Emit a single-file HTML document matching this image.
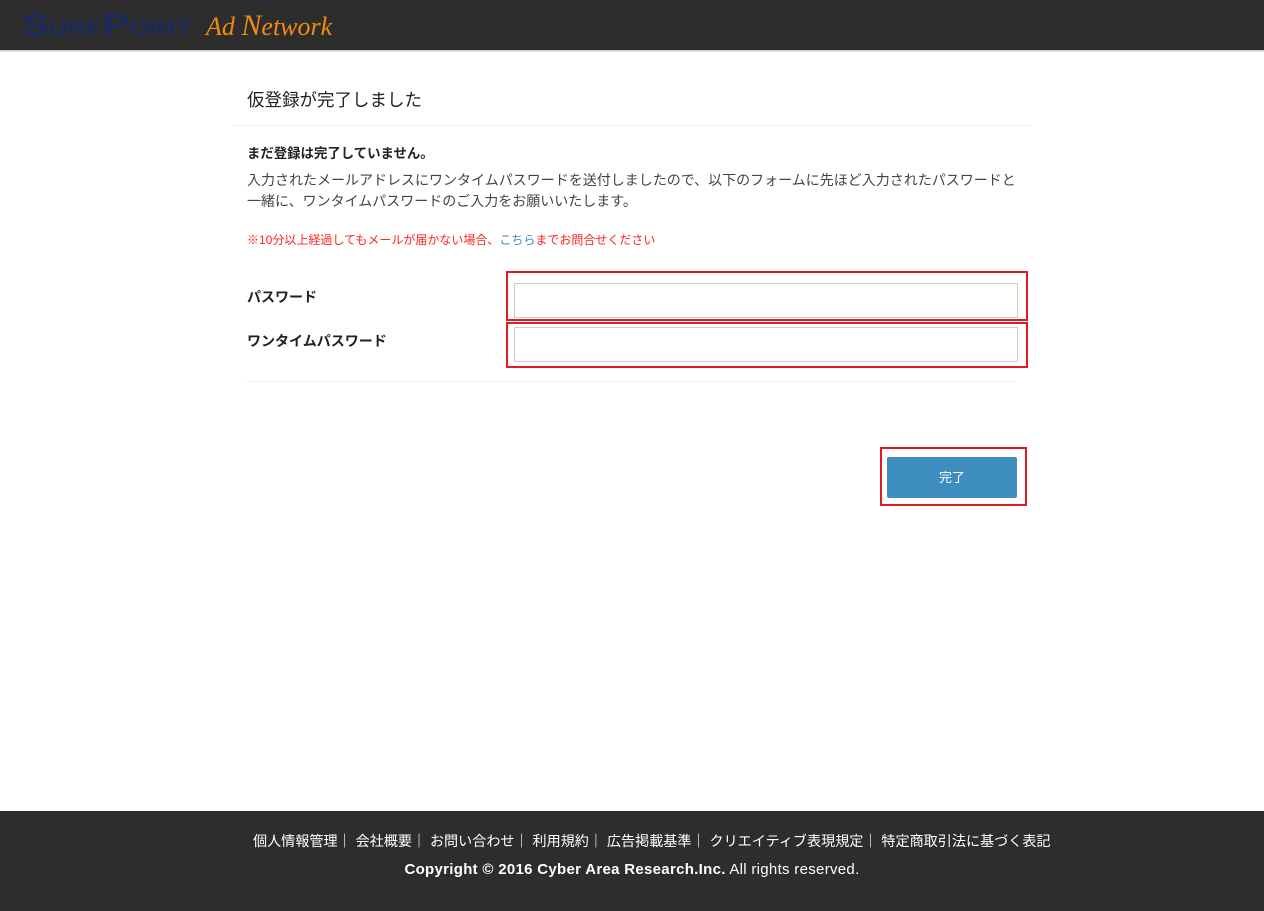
<!DOCTYPE html>
<html><head><meta charset="utf-8"><style>
body{margin:0;width:1264px;height:911px;position:relative;background:#fff;font-family:"Liberation Sans","Noto Sans CJK JP",sans-serif;color:#333;overflow:hidden}
.hdr{position:absolute;left:0;top:0;width:1264px;height:50px;background:#2d2d2d;box-shadow:0 1px 2px rgba(0,0,0,.3)}
.logo1{position:absolute;left:22px;top:9px;font-family:"Liberation Sans",sans-serif;font-weight:900;color:#1a2a5e;font-size:31px;line-height:32px;white-space:nowrap;transform:scaleX(1.3);transform-origin:left}
.logo1 small{font-size:20px}
.logo2{position:absolute;left:206px;top:9px;font-family:"Liberation Serif",serif;font-style:italic;color:#f08c10;font-size:26px;white-space:nowrap}
.abs{position:absolute;white-space:nowrap}
.box{position:absolute;border:2px solid #e01b24}
.inp{position:absolute;border:1px solid #ccc;background:#fff}
.ftr{position:absolute;left:0;top:811px;width:1264px;height:100px;background:#2d2d2d;color:#fff}
</style></head><body>
<div class="hdr"><div class="logo1">S<small>URF</small>P<small>OINT</small></div><div class="logo2">Ad <span style="font-size:30px">N</span>etwork</div></div>
<div class="abs" style="left:247px;top:87px;font-size:17.5px;color:#222">仮登録が完了しました</div>
<div class="abs" style="left:232px;top:125px;width:800px;height:1px;background:#eee"></div>
<div class="abs" style="left:247px;top:142px;font-size:13.4px;font-weight:bold;color:#222">まだ登録は完了していません。</div>
<div class="abs" style="left:247px;top:170px;font-size:14px;line-height:21px;color:#444">入力されたメールアドレスにワンタイムパスワードを送付しましたので、以下のフォームに先ほど入力されたパスワードと<br>一緒に、ワンタイムパスワードのご入力をお願いいたします。</div>
<div class="abs" style="left:247px;top:231px;font-size:12px;color:#f22">※10分以上経過してもメールが届かない場合、<span style="color:#3a85c0">こちら</span>までお問合せください</div>
<div class="abs" style="left:247px;top:287px;font-size:14px;font-weight:bold;color:#222">パスワード</div>
<div class="abs" style="left:247px;top:331px;font-size:14px;font-weight:bold;color:#222">ワンタイムパスワード</div>
<div class="box" style="left:506px;top:271px;width:518px;height:46px"></div>
<div class="inp" style="left:514px;top:283px;width:502px;height:33px"></div>
<div class="box" style="left:506px;top:322px;width:518px;height:42px"></div>
<div class="inp" style="left:514px;top:327px;width:502px;height:33px"></div>
<div class="abs" style="left:247px;top:381px;width:769px;height:1px;background:#eee"></div>
<div class="box" style="left:880px;top:447px;width:143px;height:55px"></div>
<div class="abs" style="left:887px;top:457px;width:130px;height:41px;background:#3e8dbf;border-radius:2px;color:#fff;font-size:13px;text-align:center;line-height:41px">完了</div>
<div class="ftr">
<div class="abs" style="left:253px;top:20px;font-size:14.1px">個人情報管理｜ 会社概要｜ お問い合わせ｜ 利用規約｜ 広告掲載基準｜ クリエイティブ表現規定｜ 特定商取引法に基づく表記</div>
<div class="abs" style="left:0;width:1264px;top:50px;text-align:center;font-size:15px;letter-spacing:0.3px"><b>Copyright © 2016 Cyber Area Research.Inc.</b> All rights reserved.</div>
</div>
</body></html>
